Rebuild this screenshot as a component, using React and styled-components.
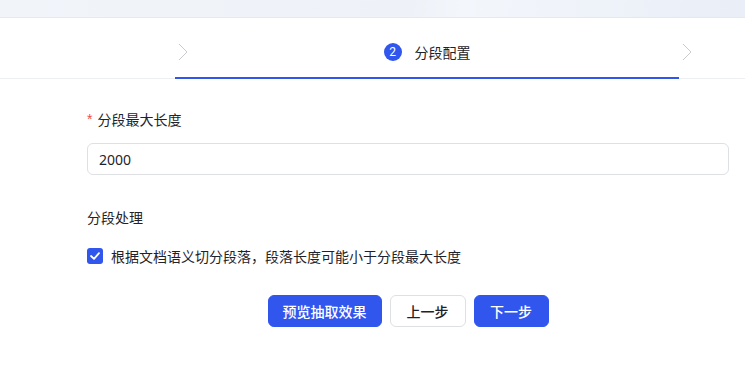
import React from "react";
import styled, { createGlobalStyle } from "styled-components";

const Global = createGlobalStyle`
  html, body { margin: 0; padding: 0; background: #fff; }
  body { font-family: "Noto Sans CJK SC", "Noto Sans", sans-serif; color: #1f2329; }
  * { box-sizing: border-box; }
`;

const Page = styled.div`
  width: 745px;
  height: 379px;
  overflow: hidden;
  background: #fff;
`;

const Banner = styled.div`
  height: 18px;
  background: linear-gradient(100deg, #f1f4f9 0%, #eef2f8 55%, #f3f6fb 62%, #e9eef7 100%);
  border-bottom: 1px solid #e4e8ef;
`;

const Steps = styled.div`
  display: flex;
  height: 61px;
  border-bottom: 1px solid #eeeff2;
`;

const Step = styled.div`
  position: relative;
  flex: ${(p) => (p.$width ? `0 0 ${p.$width}px` : "1 1 auto")};
  display: flex;
  align-items: center;
  justify-content: center;
  padding-top: 8px;
  border-bottom: 2px solid ${(p) => (p.$active ? "#3056ee" : "transparent")};
  margin-bottom: -1px;
`;

const Chevron = styled.svg`
  position: absolute;
  left: 3px;
  top: 25px;
  width: 10px;
  height: 18px;
`;

const Circle = styled.span`
  width: 18px;
  height: 18px;
  border-radius: 50%;
  background: #3056ee;
  color: #fff;
  font-family: "Roboto", "Noto Sans", sans-serif;
  font-size: 12px;
  display: flex;
  align-items: center;
  justify-content: center;
  margin-right: 13px;
`;

const StepTitle = styled.span`
  font-size: 14px;
  color: #1f2329;
  line-height: 20px;
`;

const Form = styled.div`
  padding: 30px 16px 0 87px;
  display: flex;
  flex-direction: column;
`;

const Label = styled.div`
  font-size: 14px;
  line-height: 20px;
  color: #1f2329;
  display: flex;
  align-items: center;
`;

const Required = styled.span`
  color: #f54a45;
  font-size: 14px;
  margin-right: 5px;
  font-family: "Liberation Sans", sans-serif;
`;

const Input = styled.div`
  margin-top: 14px;
  height: 32px;
  border: 1px solid #dee0e3;
  border-radius: 6px;
  padding: 0 11px;
  display: flex;
  align-items: center;
  font-size: 14px;
  color: #1f2329;
  font-family: "Noto Sans", "Noto Sans CJK SC", sans-serif;
`;

const SectionLabel = styled(Label)`
  margin-top: 32px;
`;

const CheckRow = styled.label`
  margin-top: 19px;
  display: flex;
  align-items: center;
  gap: 8px;
  font-size: 14px;
  line-height: 20px;
  color: #1f2329;
`;

const Box = styled.span`
  width: 16px;
  height: 16px;
  border-radius: 3px;
  background: #3056ee;
  display: flex;
  align-items: center;
  justify-content: center;
`;

const Actions = styled.div`
  margin-top: 29px;
  display: flex;
  justify-content: center;
  gap: 8px;
`;

const Button = styled.button`
  height: 32px;
  padding: 0 ${(p) => p.$pad}px;
  border-radius: 6px;
  font-family: "Noto Sans CJK SC", sans-serif;
  font-size: 14px;
  font-weight: 500;
  cursor: pointer;
  border: 1px solid ${(p) => (p.$primary ? "#3056ee" : "#dee0e3")};
  background: ${(p) => (p.$primary ? "#3056ee" : "#fff")};
  color: ${(p) => (p.$primary ? "#fff" : "#1f2329")};
`;

const ChevronIcon = () => (
  <Chevron viewBox="0 0 10 18">
    <path d="M1 1 L9 9 L1 17" fill="none" stroke="#c9cbd0" strokeWidth="1" />
  </Chevron>
);

export default function App() {
  return (
    <Page>
      <Global />
      <Banner />
      <Steps>
        <Step $width={175} />
        <Step $width={504} $active>
          <ChevronIcon />
          <Circle>2</Circle>
          <StepTitle>分段配置</StepTitle>
        </Step>
        <Step>
          <ChevronIcon />
        </Step>
      </Steps>
      <Form>
        <Label>
          <Required>*</Required>分段最大长度
        </Label>
        <Input>2000</Input>
        <SectionLabel>分段处理</SectionLabel>
        <CheckRow>
          <Box>
            <svg width="10" height="8" viewBox="0 0 10 8">
              <path d="M1 4 L4 6.8 L9 1.2" fill="none" stroke="#fff" strokeWidth="1.8" strokeLinecap="round" strokeLinejoin="round" />
            </svg>
          </Box>
          根据文档语义切分段落，段落长度可能小于分段最大长度
        </CheckRow>
        <Actions>
          <Button $primary $pad={14}>预览抽取效果</Button>
          <Button $pad={16}>上一步</Button>
          <Button $primary $pad={15.5}>下一步</Button>
        </Actions>
      </Form>
    </Page>
  );
}
